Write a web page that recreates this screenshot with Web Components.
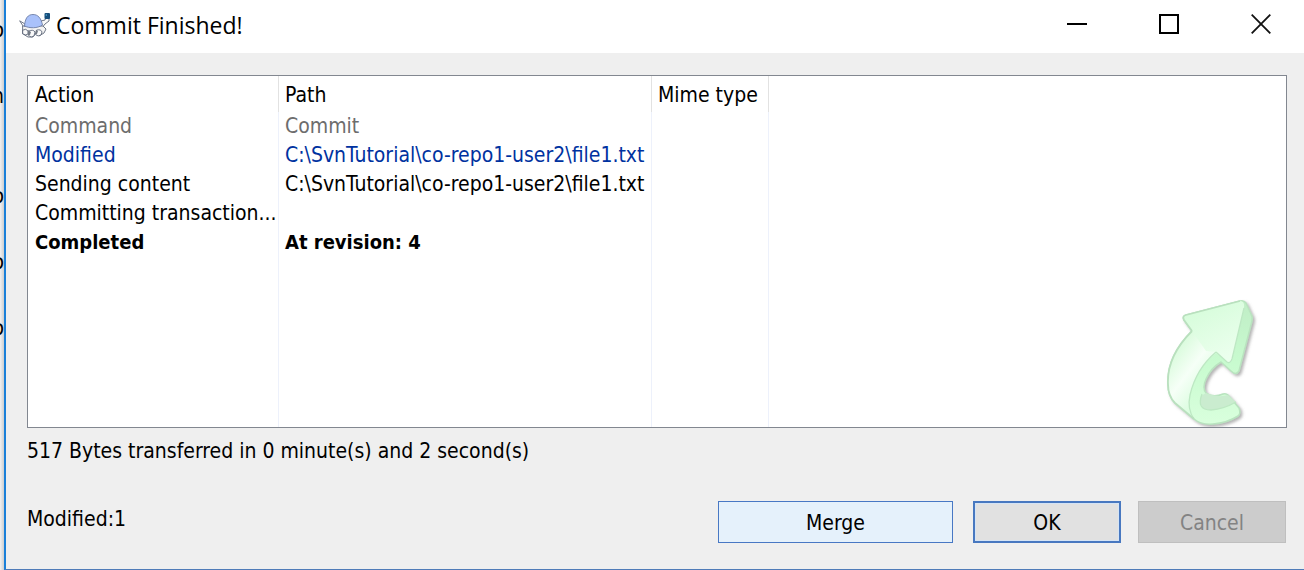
<!DOCTYPE html>
<html lang="en">
<head>
<meta charset="utf-8">
<title>Commit Finished!</title>
<style>
  body {
    margin: 0;
    font: 21px/29px "DejaVu Sans Condensed", "Noto Sans", sans-serif;
    color: #000;
    background: #efefef;
  }
</style>
</head>
<body>
<commit-screen></commit-screen>

<template id="commit-screen">
  <style>
    :host { display: flex; min-height: 100vh; }
    dialog-window { flex: 1; min-width: 0; }
    .actions { display: flex; gap: 17px; }
    .summary { display: flex; align-items: flex-start; justify-content: space-between; padding-right: 1px; }
    p { margin: 0; }
    .summary p { padding-top: 4px; }
    .merge { width: 235px; margin-right: 3px; }
    .ok, .cancel { width: 148px; }
  </style>
  <window-behind></window-behind>
  <dialog-window>
    <title-bar slot="title">Commit Finished!</title-bar>
    <progress-list></progress-list>
    <p slot="status">517 Bytes transferred in 0 minute(s) and 2 second(s)</p>
    <div slot="footer" class="summary">
      <p>Modified:1</p>
      <div class="actions">
        <push-button class="merge" variant="hot">Merge</push-button>
        <push-button class="ok" variant="default">OK</push-button>
        <push-button class="cancel" disabled>Cancel</push-button>
      </div>
    </div>
  </dialog-window>
</template>

<template id="window-behind">
  <style>
    :host {
      display: grid;
      grid-template-rows: 60px 66px 100px 66px 66px;
      grid-template-columns: 4px;
      width: 4px;
      overflow: hidden;
      background: linear-gradient(90deg, #f2f2f2, #cfcfcf);
    }
    span { display: flex; justify-content: flex-end; align-items: flex-end; line-height: 60px; height: 60px; align-self: end; }
  </style>
  <span>o</span><span>n</span><span>o</span><span>o</span><span>o</span>
</template>

<template id="dialog-window">
  <style>
    :host {
      display: flex;
      flex-direction: column;
      box-sizing: border-box;
      border-left: 2px solid #1a80d9;
      border-bottom: 1px solid #4f7bb8;
      background: #efefef;
    }
    main { flex: 1; display: flex; flex-direction: column; padding: 22px 17px 26px 21px; }
    .list { flex: 1; display: flex; }
    .status { padding: 9px 0 35px; }
  </style>
  <slot name="title"></slot>
  <main>
    <div class="list"><slot></slot></div>
    <div class="status"><slot name="status"></slot></div>
    <slot name="footer"></slot>
  </main>
</template>

<template id="title-bar">
  <style>
    :host { display: flex; align-items: center; height: 53px; background: #fff; }
    .turtle { width: 32px; height: 26px; margin-left: 13px; margin-bottom: 4px; }
    h1 { flex: 1; margin: 0 0 0 5px; font: 400 23px/50px "Open Sans", "Noto Sans", sans-serif; height: 53px; }
    button { width: 92px; height: 53px; padding: 0; border: 0; background: none; display: flex; align-items: center; justify-content: center; }
    button svg { display: block; padding-bottom: 5px; }
    nav { display: flex; margin-right: -3px; }
  </style>
  <svg class="turtle" viewBox="0 0 32 26" aria-hidden="true">
    <g stroke="#60697a" stroke-width=".9" stroke-linejoin="round" stroke-linecap="round">
      <path d="M1 9l5 3 2 4-3-1z" fill="#fff"/>
      <path d="M22 9l4-1 1-3 3 1v3l-4 3-4 5z" fill="#f8f8f8"/>
      <path d="M4 14h20l3 3-2 4-5 3-3-3-3 4H9l-5-3z" fill="#f3f3f3"/>
      <path d="M4 18q3-2 5 1v3q-2 2-5 0zM10 19q4-2 6 1l-1 4q-3 2-5 0zM18 18q4-1 5 2l-1 3q-3 2-5 0z" fill="#fafafa"/>
      <path d="M5.500 14C6 6 9 2.500 14 2.500S22 6 23.500 13c-5 3.500-13 3.500-18 1z" fill="#a9c1fa" stroke="#6d7ea6"/>
    </g>
    <path d="M9 18l3 2-1 3H9zM17 18l2 1-1 3h-2z" fill="#737a85"/>
    <rect x="25.500" y="1" width="5.500" height="6" rx="1" fill="#174f7c"/>
    <path d="M26 3l2-1v2z" fill="#4da1c9"/>
  </svg>
  <h1><slot></slot></h1>
  <nav>
    <button aria-label="Minimize"><svg width="20" height="20" viewBox="0 0 20 20"><path d="M0 10h20" stroke="#000" stroke-width="2"/></svg></button>
    <button aria-label="Maximize"><svg width="20" height="20" viewBox="0 0 20 20"><path d="M1 1h18v18H1z" fill="none" stroke="#000" stroke-width="2"/></svg></button>
    <button aria-label="Close"><svg width="20" height="20" viewBox="0 0 20 20"><path d="M.7.7l18.600 18.600M19.300.7L.7 19.300" stroke="#111" stroke-width="1.800"/></svg></button>
  </nav>
</template>

<template id="progress-list">
  <style>
    :host { flex: 1; display: flex; position: relative; border: 1px solid #828790; background: #fff; }
    table { flex: 1; width: 100%; table-layout: fixed; border-collapse: separate; border-spacing: 0; }
    th, td { box-sizing: border-box; padding: 0 0 0 6px; text-align: left; font-weight: 400; white-space: nowrap; height: 29px; border-right: 1px solid #edf1fb; }
    th { height: 36px; padding-top: 3px; border-right-color: #e2e2e2; }
    td:first-child, th:first-child { padding-left: 7px; }
    th:last-child, td:last-child { border-right: 0; }
    .action { width: 251px; }
    .path { width: 373px; }
    .mime { width: 117px; }
    .muted { color: #6d6d6d; }
    .modified { color: #0032a0; }
    .done td { font-weight: 700; font-size: 20px; }
    .rest td { height: auto; }
    svg { position: absolute; right: 24px; bottom: 0; }
  </style>
  <table>
    <thead><tr><th class="action">Action</th><th class="path">Path</th><th class="mime">Mime type</th><th></th></tr></thead>
    <tbody></tbody>
  </table>
  <svg width="96" height="130" viewBox="0 0 96 130" aria-hidden="true">
    <defs>
      <linearGradient id="band" x1="0" y1="0.300" x2="0.600" y2="1">
        <stop offset="0" stop-color="#d6fbd9"/><stop offset=".4" stop-color="#f6fff7"/><stop offset="1" stop-color="#c8fbcf"/>
      </linearGradient>
      <linearGradient id="head" x1="0" y1="0" x2=".5" y2="1">
        <stop offset="0" stop-color="#d2fcd7"/><stop offset="1" stop-color="#ebffed"/>
      </linearGradient>
      <linearGradient id="edge" x1="0" y1="0" x2="0" y2="1">
        <stop offset="0" stop-color="#c0edc6"/><stop offset=".5" stop-color="#c8fbcf"/><stop offset="1" stop-color="#d9ffdd"/>
      </linearGradient>
      <filter id="shade" x="-10%" y="-10%" width="125%" height="125%">
        <feDropShadow dx="2" dy="2" stdDeviation="1.500" flood-color="#777" flood-opacity=".55"/>
      </filter>
    </defs>
    <g filter="url(#shade)" stroke="#b9e3bf" stroke-width="1.500" stroke-linejoin="round">
      <path d="M20 18Q16 19 18 23L26 34C11 49 1 67 2 87Q2 99 9 106L28 122Q35 128 47 127Q61 126 72 119Q75 117 73 111L62 98Q60 96 57 97Q47 101 40 96Q36 91 40 82Q45 71 55 65L65 74Q70 79 73 74L86 24Q87 20 85 17L80 6Q78 3 74 4Z" fill="url(#edge)"/>
    </g>
    <path d="M26 34C11 49 1 67 2 87Q2 99 9 106L28 122Q21 111 24 98Q30 72 50 56L62 66L48 30Z" fill="url(#band)"/>
    <path d="M20 18Q16 19 18 23L26 34L40 54L50 55L61 65Q64 67 66 63L78 11Q79 4 74 4Z" fill="url(#head)"/>
    <path d="M35 99Q32 113 45 113Q58 112 70 105L62 98Q52 101 40 96Z" fill="#caeccf"/>
    <path d="M50 55Q30 72 24 98Q21 112 28 122M36 97Q30 113 45 113Q58 112 70 105M66 62L78 11M50 55L61 65Q64 67 66 62" fill="none" stroke="#bde8c3" stroke-width="1.300"/>
    <path d="M26 34C11 49 1 67 2 87Q2 99 9 106L28 122M74 4L20 18Q16 19 18 23L26 34" fill="none" stroke="#b9e0be" stroke-width="1.800"/>
  </svg>
</template>

<template id="push-button">
  <style>
    :host { display: block; }
    button {
      display: block; box-sizing: border-box; width: 100%; height: 42px; padding: 2px 0 0;
      font: inherit; color: #000; border: 1px solid #adadad; border-radius: 0; background: #e1e1e1;
    }
    :host([variant="hot"]) button { background: #e5f1fb; border-color: #4878c4; }
    :host([variant="default"]) button { border: 2px solid #4878c0; box-shadow: inset 0 0 0 1px #d5e4f5; }
    button:disabled { background: #ccc; border-color: #bfbfbf; color: #838383; }
  </style>
  <button type="button"><slot></slot></button>
</template>

<script>
  class TemplateElement extends HTMLElement {
    constructor() {
      super();
      const source = document.getElementById(this.localName);
      this.attachShadow({ mode: "open" }).append(source.content.cloneNode(true));
    }
  }

  const entries = [
    ["muted", "Command", "Commit"],
    ["modified", "Modified", "C:\\SvnTutorial\\co-repo1-user2\\file1.txt"],
    ["", "Sending content", "C:\\SvnTutorial\\co-repo1-user2\\file1.txt"],
    ["", "Committing transaction...", ""],
    ["done", "Completed", "At revision: 4"],
    ["rest", "", ""]
  ];

  customElements.define("push-button", class extends TemplateElement {
    connectedCallback() {
      this.shadowRoot.querySelector("button").disabled = this.hasAttribute("disabled");
    }
  });
  customElements.define("progress-list", class extends TemplateElement {
    connectedCallback() {
      const body = this.shadowRoot.querySelector("tbody");
      body.replaceChildren();
      for (const [kind, action, path] of entries) {
        const row = body.insertRow();
        row.className = kind;
        for (const text of [action, path, "", ""]) row.insertCell().textContent = text;
      }
    }
  });
  for (const name of ["title-bar", "window-behind", "dialog-window", "commit-screen"]) {
    customElements.define(name, class extends TemplateElement {});
  }
</script>
</body>
</html>
